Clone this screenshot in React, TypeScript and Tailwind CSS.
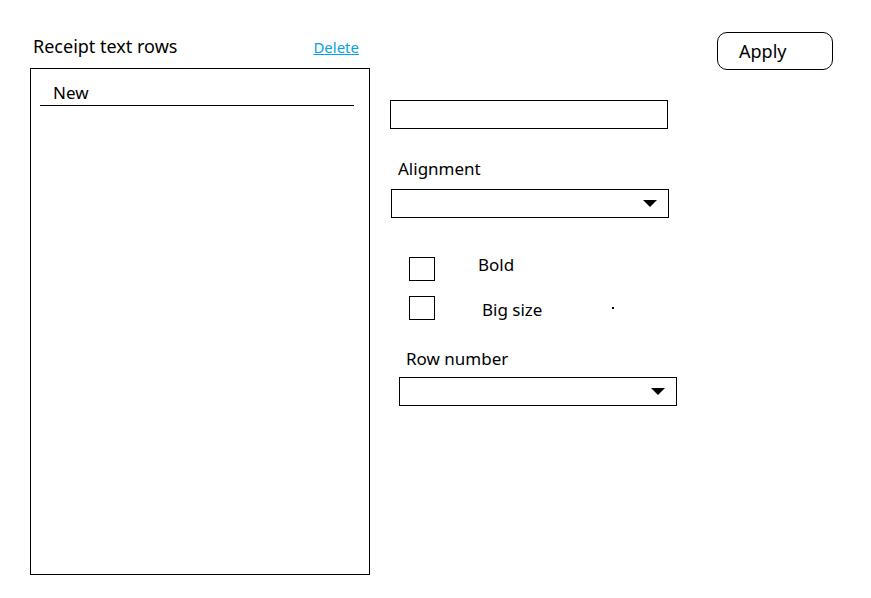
function Arrow() {
  return (
    <svg width="14" height="7" viewBox="0 0 14 7" className="shrink-0">
      <polygon points="0,0 14,0 7,7" fill="#000" />
    </svg>
  );
}

function Select({ className }: { className: string }) {
  return (
    <div className={`flex items-center justify-end h-[29px] w-[278px] border border-black pr-[11px] ${className}`}>
      <Arrow />
    </div>
  );
}

export default function App() {
  return (
    <div
      className="flex w-[871px] h-[598px] bg-white text-black"
      style={{ fontFamily: '"Noto Sans", "Open Sans", sans-serif' }}
    >
      <div className="ml-[30px] mt-[34px] w-[340px] flex flex-col">
        <div className="flex items-start justify-between h-[34px] pl-[3px] pr-[11px]">
          <span className="text-[18px] leading-[24px]">Receipt text rows</span>
          <span className="mt-[3px] text-[15px] leading-[20px] text-[#00a2e8] underline">Delete</span>
        </div>
        <div className="h-[507px] border border-black pt-[12px] px-[9px]">
          <div className="w-[314px] border-b border-black pl-[13px] text-[17px] leading-[24px]">New</div>
        </div>
      </div>

      <div className="ml-[20px] w-[300px] flex flex-col pt-[100px]">
        <div className="h-[29px] w-[278px] border border-black" />
        <div className="mt-[28px] ml-[8px] text-[17px] leading-[24px]">Alignment</div>
        <Select className="mt-[8px] ml-[1px]" />
        <div className="mt-[39px] ml-[19px] flex flex-col gap-[15px]">
          <div className="flex items-start h-[24px]">
            <div className="w-[26px] h-[24px] border border-black" />
            <span className="ml-[43px] -mt-[4px] text-[17px] leading-[24px]">Bold</span>
          </div>
          <div className="flex items-start h-[24px]">
            <div className="w-[26px] h-[24px] border border-black" />
            <span className="ml-[47px] mt-[2px] text-[17px] leading-[24px]">Big size</span>
            <span className="ml-[70px] mt-[11px] w-[2px] h-[2px] bg-black" />
          </div>
        </div>
        <div className="mt-[27px] ml-[16px] text-[17px] leading-[24px]">Row number</div>
        <Select className="mt-[6px] ml-[9px]" />
      </div>

      <div className="ml-[27px] mt-[32px]">
        <div className="w-[116px] h-[38px] border border-black rounded-[10px] flex items-center pl-[21px] text-[18px]">
          Apply
        </div>
      </div>
    </div>
  );
}
